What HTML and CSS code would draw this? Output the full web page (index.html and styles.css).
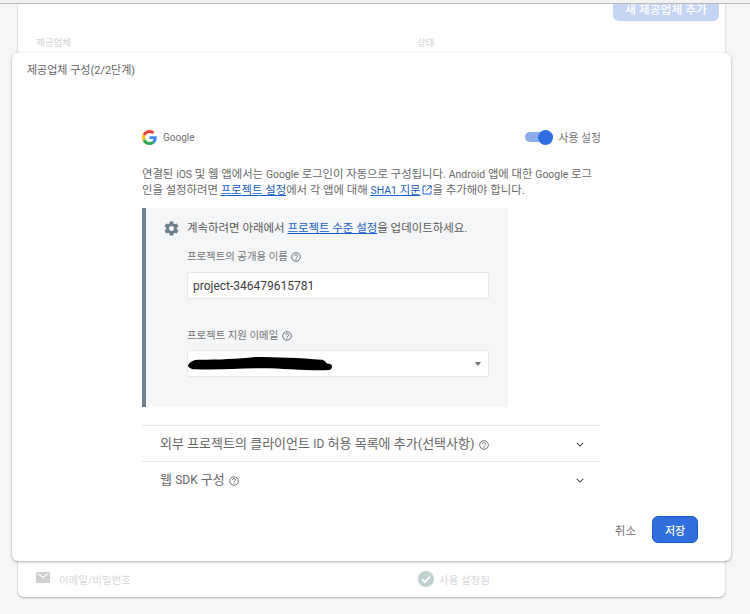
FILE: index.html
```
<!DOCTYPE html>
<html lang="ko">
<head>
<meta charset="utf-8">
<title>제공업체 구성</title>
<link rel="stylesheet" href="styles.css">
</head>
<body>
<div class="page">
  <div class="topbar"></div>
  <main class="card">
    <div class="card-head"><button class="add-btn">새 제공업체 추가</button></div>
    <div class="table-head"><span class="col-a">제공업체</span><span>상태</span></div>
    <div class="table-spacer"></div>
    <div class="table-row">
      <span class="col-a row-name">
        <svg class="mail" viewBox="0 0 14 11"><path d="M1 0h12a1 1 0 0 1 1 1v9a1 1 0 0 1-1 1H1a1 1 0 0 1-1-1V1a1 1 0 0 1 1-1zm0 2l6 4 6-4-.6-.8L7 4.600 1.600 1.200z" fill-rule="evenodd"/></svg>
        이메일/비밀번호
      </span>
      <span class="row-status">
        <svg class="check" viewBox="0 0 16 16"><circle cx="8" cy="8" r="8"/><path d="M4 8.200l3 3 5-5.500" fill="none" stroke="#fff" stroke-width="1.800"/></svg>
        사용 설정됨
      </span>
    </div>
  </main>
  <section class="modal">
    <h2 class="modal-title">제공업체 구성(2/2단계)</h2>
    <div class="modal-body">
      <div class="provider">
        <div class="brand">
          <svg class="g-logo" viewBox="0 0 48 48">
            <path fill="#EA4335" d="M24 9.500c3.500 0 6.700 1.200 9.200 3.600l6.900-6.900C35.900 2.400 30.500 0 24 0 14.600 0 6.500 5.400 2.600 13.200l8 6.200C12.400 13.700 17.700 9.500 24 9.500z"/>
            <path fill="#4285F4" d="M47 24.500c0-1.600-.1-3.100-.4-4.500H24v9h12.900c-.6 3-2.200 5.500-4.700 7.200l7.700 6c4.500-4.200 7.100-10.300 7.100-17.700z"/>
            <path fill="#FBBC05" d="M10.500 28.600c-.5-1.400-.8-3-.8-4.600s.3-3.200.8-4.600l-8-6.200C.9 16.500 0 20.100 0 24s.9 7.500 2.600 10.800l7.900-6.200z"/>
            <path fill="#34A853" d="M24 48c6.500 0 11.900-2.100 15.900-5.800l-7.700-6c-2.200 1.500-4.900 2.300-8.200 2.300-6.300 0-11.600-4.200-13.500-9.900l-7.900 6.200C6.500 42.600 14.600 48 24 48z"/>
          </svg>
          <span>Google</span>
        </div>
        <div class="toggle-wrap">
          <span class="toggle"><span class="knob"></span></span>
          <span>사용 설정</span>
        </div>
      </div>
      <p class="intro">연결된 <span class="latin">iOS</span> 및 웹 앱에서는 <span class="latin">Google</span> 로그인이 자동으로 구성됩니다. <span class="latin">Android</span> 앱에 대한 <span class="latin">Google</span> 로그<br>인을 설정하려면 <a href="#">프로젝트 설정</a>에서 각 앱에 대해 <a href="#"><span class="latin">SHA1</span> 지문</a><svg class="ext" viewBox="0 0 10 10"><path d="M4 1H1v8h8V6M5.500 .8h3.700v3.700M9 1L4.500 5.500" fill="none" stroke="#1a5fc4" stroke-width="1"/></svg>을 추가해야 합니다.</p>
      <div class="notice">
        <div class="notice-head">
          <svg class="gear" viewBox="0 0 24 24"><path d="M19.430 12.980c.04-.32.070-.64.070-.98s-.03-.66-.07-.98l2.110-1.650c.19-.15.240-.42.120-.64l-2-3.460c-.12-.22-.39-.3-.61-.22l-2.490 1c-.52-.4-1.080-.73-1.690-.98l-.38-2.650A.488.488 0 0 0 14 2h-4c-.25 0-.46.18-.49.42l-.38 2.650c-.61.25-1.170.59-1.690.98l-2.490-1c-.23-.09-.49 0-.61.22l-2 3.460c-.13.22-.07.49.12.64l2.110 1.650c-.04.32-.07.65-.07.98s.03.66.07.98l-2.110 1.650c-.19.15-.24.42-.12.64l2 3.460c.12.22.39.3.61.22l2.490-1c.52.4 1.080.73 1.690.98l.38 2.650c.03.24.24.42.49.42h4c.25 0 .46-.18.49-.42l.38-2.650c.61-.25 1.170-.59 1.690-.98l2.490 1c.23.09.49 0 .61-.22l2-3.460c.12-.22.07-.49-.12-.64l-2.110-1.650zM12 15.500c-1.930 0-3.500-1.570-3.500-3.500s1.570-3.500 3.500-3.500 3.500 1.570 3.500 3.500-1.570 3.500-3.500 3.500z"/></svg>
          <span>계속하려면 아래에서 <a href="#">프로젝트 수준 설정</a>을 업데이트하세요.</span>
        </div>
        <div class="fields">
          <label class="field-label">프로젝트의 공개용 이름 <svg class="help" viewBox="0 0 10 10"><circle cx="5" cy="5" r="4.300"/><path d="M3.500 4a1.500 1.400 0 1 1 2.300 1.200C5.200 5.600 5 5.800 5 6.400M5 7v1"/></svg></label>
          <div class="input name-input">project-346479615781</div>
          <label class="field-label second">프로젝트 지원 이메일 <svg class="help" viewBox="0 0 10 10"><circle cx="5" cy="5" r="4.300"/><path d="M3.500 4a1.500 1.400 0 1 1 2.300 1.200C5.200 5.600 5 5.800 5 6.400M5 7v1"/></svg></label>
          <div class="input select">
            <svg class="redact" viewBox="0 0 146 15" preserveAspectRatio="none"><path d="M0 9C2 5 5 3 12 3 30 3 50 2 67 0c20 0 45 1 67 3 3 1 4 3 5 4 3 0 5 1 5 3s-1 4-3 4c-20 1-45-2-67-2-22 0-45 2-67 1-4 0-7-2-7-4z"/></svg>
            <span class="caret"></span>
          </div>
        </div>
      </div>
      <div class="accordion first">
        <span class="acc-label">외부 프로젝트의 클라이언트 <span class="latin">ID</span> 허용 목록에 추가(선택사항) <svg class="help" viewBox="0 0 10 10"><circle cx="5" cy="5" r="4.300"/><path d="M3.500 4a1.500 1.400 0 1 1 2.300 1.200C5.200 5.600 5 5.800 5 6.400M5 7v1"/></svg></span>
        <svg class="chev" viewBox="0 0 10 6"><path d="M1 1l4 4 4-4"/></svg>
      </div>
      <div class="accordion">
        <span class="acc-label">웹 <span class="latin">SDK</span> 구성 <svg class="help" viewBox="0 0 10 10"><circle cx="5" cy="5" r="4.300"/><path d="M3.500 4a1.500 1.400 0 1 1 2.300 1.200C5.200 5.600 5 5.800 5 6.400M5 7v1"/></svg></span>
        <svg class="chev" viewBox="0 0 10 6"><path d="M1 1l4 4 4-4"/></svg>
      </div>
    </div>
    <footer class="modal-foot">
      <button class="cancel">취소</button>
      <button class="save">저장</button>
    </footer>
  </section>
</div>
</body>
</html>
```
FILE: styles.css
```
* { box-sizing: border-box; }
html, body { margin: 0; padding: 0; }
body { font-family: Roboto, "Noto Sans CJK KR", sans-serif; }
a { color: #1a5fc4; }
button { font-family: inherit; }
.latin { font-size: .92em; }
.page { position: relative; width: 750px; height: 614px; overflow: hidden; background: #f5f6f8; }
.topbar { height: 4px; background: #f2f2f2; border-bottom: 1px solid #bdbdbd; }
.card { width: 707px; height: 593px; margin-left: 18px; background: #fff; border-radius: 0 0 6px 6px; box-shadow: 0 1px 2px rgba(0,0,0,.3); display: flex; flex-direction: column; }
.card-head { display: flex; justify-content: flex-end; padding-right: 6px; height: 17px; }
.add-btn { width: 106px; height: 17px; border: 0; border-radius: 0 0 6px 6px; background: #c3d4f4; color: #fff; font-size: 11.800px; font-weight: 500; padding: 0 0 14px; overflow: hidden; line-height: 13px; }
.table-head { display: flex; padding-top: 15px; font-size: 9.500px; color: #d4d4d4; line-height: 14px; }
.col-a { width: 399px; padding-left: 18px; }
.table-spacer { flex: 1; }
.table-row { display: flex; align-items: center; height: 36px; font-size: 10.500px; color: #d8d8d8; }
.row-name { display: flex; align-items: center; gap: 9px; }
.mail { width: 14px; height: 11px; fill: #d0d0d0; margin-bottom: 3px; }
.row-status { display: flex; align-items: center; gap: 5px; margin-left: 1px; }
.check { width: 16px; height: 16px; fill: #bfd2cf; }
.modal { position: absolute; left: 12px; top: 53px; width: 719px; height: 508px; background: #fff; border-radius: 6px; box-shadow: 0 1px 3px rgba(0,0,0,.32); display: flex; flex-direction: column; }
.modal-title { margin: 0; padding: 11px 15px 0; font-size: 11px; font-weight: 400; color: #666; line-height: 14px; }
.modal-body { width: 459px; margin-left: 130px; padding-top: 49px; flex: 1; }
.provider { display: flex; justify-content: space-between; align-items: center; height: 20px; font-size: 10px; color: #757575; }
.brand { display: flex; align-items: center; gap: 6px; }
.g-logo { width: 15px; height: 15px; }
.toggle-wrap { display: flex; align-items: center; gap: 6px; font-size: 10.800px; }
.toggle { position: relative; display: block; width: 28px; height: 10px; border-radius: 5px; background: #8cace9; }
.knob { position: absolute; right: 0; top: -2.500px; width: 15px; height: 15px; border-radius: 50%; background: #2f6de0; }
.intro { height: 29px; margin: 20px 0 0; font-size: 11.350px; line-height: 14.500px; color: #6a6a6a; white-space: nowrap; }
.ext { width: 10px; height: 10px; margin: 0 1px; vertical-align: -1px; }
.notice { width: 366px; height: 199px; margin-top: 12px; background: #f4f6f8; border-left: 4px solid #6d8393; padding: 12px 0 0 17px; }
.notice-head { display: flex; align-items: center; gap: 7px; font-size: 11.450px; color: #5a5a5a; line-height: 15px; white-space: nowrap; }
.gear { width: 17px; height: 17px; fill: #6d7f8c; flex: none; }
.fields { padding-left: 24px; }
.field-label { display: block; margin-top: 13px; font-size: 10.400px; color: #757575; line-height: 14px; }
.field-label.second { margin-top: 30px; }
.help { width: 10px; height: 10px; vertical-align: -1.500px; fill: none; stroke: #5f6368; stroke-width: .9; margin-left: 1px; }
.input { display: flex; align-items: center; justify-content: space-between; width: 302px; height: 27px; margin-top: 8px; background: #fff; border: 1px solid #e6e8ea; border-radius: 2px; padding: 0 5px; font-size: 12px; color: #3c4043; }
.select { margin-top: 7px; padding-right: 7px; }
.redact { width: 146px; height: 14px; fill: #000; margin-left: -5px; }
.caret { width: 0; height: 0; border-left: 3.500px solid transparent; border-right: 3.500px solid transparent; border-top: 4px solid #6f6f6f; }
.accordion { display: flex; justify-content: space-between; align-items: center; height: 36px; border-top: 1px solid #e9e9e9; padding: 0 17px 0 18px; font-size: 13px; color: #666; white-space: nowrap; }
.accordion.first { margin-top: 18px; }
.acc-label { margin-bottom: 2px; }
.chev { width: 8px; height: 5px; fill: none; stroke: #444; stroke-width: 1.300; margin-top: 2px; }
.modal-foot { display: flex; justify-content: flex-end; align-items: center; gap: 16px; padding: 0 33px 18px 0; }
.cancel { border: 0; background: none; padding: 0; font-size: 11.500px; color: #757575; }
.save { width: 46px; height: 27px; border: 1px solid #1a5fc4; border-radius: 6px; background: #316fde; color: #fff; font-size: 11px; font-weight: 500; padding: 0; }
```
